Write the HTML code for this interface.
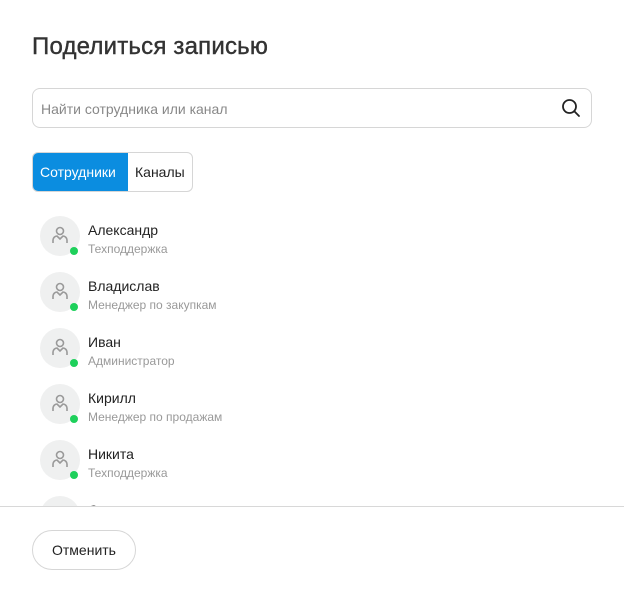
<!DOCTYPE html>
<html><head><meta charset="utf-8"><style>
*{box-sizing:border-box;margin:0;padding:0}
body{width:624px;height:602px;background:#fff;font-family:"Liberation Sans",Roboto,sans-serif;position:relative;overflow:hidden;color:#222}
h1{position:absolute;left:32px;top:33px;font-size:24px;font-weight:normal;color:#333;-webkit-text-stroke:0.4px #333;letter-spacing:0.2px}
.search{position:absolute;left:32px;top:88px;width:560px;height:40px;border:1px solid #d6d6d6;border-radius:8px}
.search span{position:absolute;left:8px;top:12px;font-size:14px;color:#888}
.search svg{position:absolute;right:10px;top:9px}
.tabs{position:absolute;left:32px;top:152px;height:40px;display:flex;border:1px solid #d6d6d6;border-radius:6px;overflow:hidden}
.tabs div{font-size:14px;padding:0 7px;line-height:38px}
.tabs .a{background:#0b8de0;color:#fff;width:95px}
.list{position:absolute;left:0;top:216px;width:624px;height:290px;overflow:hidden}
.row{position:absolute;left:40px;height:40px}
.av{position:absolute;left:0;top:0;width:40px;height:40px;border-radius:50%;background:#eff0f0}
.av svg{position:absolute;left:10px;top:9px}
.dot{position:absolute;left:30px;top:31px;width:8px;height:8px;border-radius:50%;background:#1ed05b}
.n{position:absolute;left:48px;top:6px;font-size:14px;white-space:nowrap;color:#222}
.s{position:absolute;left:48px;top:26px;font-size:12px;white-space:nowrap;color:#999}
.line{position:absolute;left:0;top:506px;width:624px;height:1px;background:#d8d8d8}
.btn{position:absolute;left:32px;top:530px;width:104px;height:40px;border:1px solid #d6d6d6;border-radius:20px;font-size:14px;text-align:center;line-height:38px;color:#222}
</style></head><body>
<h1>Поделиться записью</h1>
<div class="search"><span>Найти сотрудника или канал</span>
<svg width="20" height="20" viewBox="0 0 20 20"><circle cx="8.5" cy="8.5" r="6.5" fill="none" stroke="#222" stroke-width="1.8"/><path d="M13.3 13.3L18 18" stroke="#222" stroke-width="1.8" stroke-linecap="round"/></svg></div>
<div class="tabs"><div class="a">Сотрудники</div><div>Каналы</div></div>
<div class="list">
<div class="row" style="top:0"><div class="av"><svg width="20" height="22" viewBox="0 0 20 22"><circle cx="10" cy="6" r="3.5" fill="none" stroke="#999" stroke-width="1.6"/><path d="M3 18v-3c0-2 2-4 4-4l3 3 3-3c2 0 4 2 4 4v3" fill="none" stroke="#999" stroke-width="1.6"/></svg></div><div class="dot"></div><div class="n">Александр</div><div class="s">Техподдержка</div></div>
<div class="row" style="top:56px"><div class="av"><svg width="20" height="22" viewBox="0 0 20 22"><circle cx="10" cy="6" r="3.5" fill="none" stroke="#999" stroke-width="1.6"/><path d="M3 18v-3c0-2 2-4 4-4l3 3 3-3c2 0 4 2 4 4v3" fill="none" stroke="#999" stroke-width="1.6"/></svg></div><div class="dot"></div><div class="n">Владислав</div><div class="s">Менеджер по закупкам</div></div>
<div class="row" style="top:112px"><div class="av"><svg width="20" height="22" viewBox="0 0 20 22"><circle cx="10" cy="6" r="3.5" fill="none" stroke="#999" stroke-width="1.6"/><path d="M3 18v-3c0-2 2-4 4-4l3 3 3-3c2 0 4 2 4 4v3" fill="none" stroke="#999" stroke-width="1.6"/></svg></div><div class="dot"></div><div class="n">Иван</div><div class="s">Администратор</div></div>
<div class="row" style="top:168px"><div class="av"><svg width="20" height="22" viewBox="0 0 20 22"><circle cx="10" cy="6" r="3.5" fill="none" stroke="#999" stroke-width="1.6"/><path d="M3 18v-3c0-2 2-4 4-4l3 3 3-3c2 0 4 2 4 4v3" fill="none" stroke="#999" stroke-width="1.6"/></svg></div><div class="dot"></div><div class="n">Кирилл</div><div class="s">Менеджер по продажам</div></div>
<div class="row" style="top:224px"><div class="av"><svg width="20" height="22" viewBox="0 0 20 22"><circle cx="10" cy="6" r="3.5" fill="none" stroke="#999" stroke-width="1.6"/><path d="M3 18v-3c0-2 2-4 4-4l3 3 3-3c2 0 4 2 4 4v3" fill="none" stroke="#999" stroke-width="1.6"/></svg></div><div class="dot"></div><div class="n">Никита</div><div class="s">Техподдержка</div></div>
<div class="row" style="top:280px"><div class="av"></div><div class="n">Олег</div></div>
</div>
<div class="line"></div>
<div class="btn">Отменить</div>
</body></html>
